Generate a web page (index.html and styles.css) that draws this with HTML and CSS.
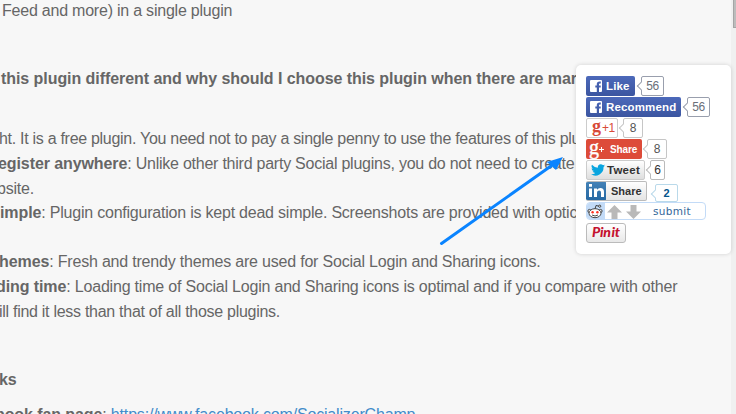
FILE: index.html
```html
<!DOCTYPE html>
<html lang="en">
<head>
<meta charset="utf-8">
<title>Social Login and Sharing</title>
<link rel="stylesheet" href="styles.css">
</head>
<body>
<main class="article">
  <p class="line l1">Feed and more) in a single plugin</p>
  <p class="line l2"><b>this plugin different and why should I choose this plugin when there are mar</b></p>
  <p class="line l3">ht. It is a free plugin. You need not to pay a single penny to use the features of this plu</p>
  <p class="line l4"><b>egister anywhere</b>: Unlike other third party Social plugins, you do not need to create</p>
  <p class="line l5">bsite.</p>
  <p class="line l6"><b>imple</b>: Plugin configuration is kept dead simple. Screenshots are provided with optic</p>
  <p class="line l7"><b>hemes</b>: Fresh and trendy themes are used for Social Login and Sharing icons.</p>
  <p class="line l8"><b>ding time</b>: Loading time of Social Login and Sharing icons is optimal and if you compare with other</p>
  <p class="line l9">ill find it less than that of all those plugins.</p>
  <p class="line l10"><b>ks</b></p>
  <p class="line l11"><b>book fan page</b>: <a>https://www.facebook.com/SocializerChamp</a></p>
</main>
<div class="scrollbar"><div class="thumb"></div></div>
<aside class="panel">
  <div class="row">
    <span class="btn fb like"><svg width="12" height="12" viewBox="0 0 12 12"><path fill="#fff" d="M1 0h10q1 0 1 1v10q0 1-1 1H9V7.500h1.700V5.500H9V4.300q0-.8.900-.8h.9V1.500H9.500Q6.800 1.500 6.800 4v1.500H5.300v2h1.500V12H1q-1 0-1-1V1q0-1 1-1z"/></svg><b>Like</b></span>
    <span class="count fbc">56</span>
  </div>
  <div class="row">
    <span class="btn fb rec"><svg width="12" height="12" viewBox="0 0 12 12"><path fill="#fff" d="M1 0h10q1 0 1 1v10q0 1-1 1H9V7.500h1.700V5.500H9V4.300q0-.8.900-.8h.9V1.500H9.500Q6.800 1.500 6.800 4v1.500H5.300v2h1.500V12H1q-1 0-1-1V1q0-1 1-1z"/></svg><b>Recommend</b></span>
    <span class="count fbc">56</span>
  </div>
  <div class="row">
    <span class="btn plus"><span class="g">g</span><span class="one">+1</span></span>
    <span class="count gc">8</span>
  </div>
  <div class="row">
    <span class="btn gshare"><span class="g">g</span><svg width="5" height="5" viewBox="0 0 5 5"><path d="M0 2.500h5M2.500 0v5" stroke="#fff"/></svg><b>Share</b></span>
    <span class="count gc">8</span>
  </div>
  <div class="row">
    <span class="btn tweet"><svg width="14" height="12" viewBox="0 0 24 20"><path fill="#0aa5df" d="M24 2.400a10 10 0 0 1-2.800.8A5 5 0 0 0 23.300.400a10 10 0 0 1-3.100 1.200A5 5 0 0 0 11.800 6 14 14 0 0 1 1.700.900a5 5 0 0 0 1.500 6.600A5 5 0 0 1 1 6.900a5 5 0 0 0 4 4.900 5 5 0 0 1-2.200.1 5 5 0 0 0 4.600 3.400A10 10 0 0 1 0 17.400 14 14 0 0 0 21.500 4.900 10 10 0 0 0 24 2.400z"/></svg><b>Tweet</b></span>
    <span class="count tc">6</span>
  </div>
  <div class="row">
    <span class="btn linked"><span class="in"><svg width="15" height="14" viewBox="0 0 15 14"><path fill="#fff" d="M0 4.500h3V13H0zM0 0h3v2.800H0zM5 4.500h3v1.300q1.200-1.700 3.300-1.700Q15 4.100 15 8v5h-3V8.500q0-2-1.800-2Q8 6.500 8 8.800V13H5z"/></svg></span><b>Share</b></span>
    <span class="count lc">2</span>
  </div>
  <div class="row">
    <span class="btn reddit"><span class="alien"><svg width="16" height="15" viewBox="0 0 16 15" stroke="#333" stroke-width=".9"><path fill="none" d="M8 5l1-3.500 3 .7"/><circle cx="12.700" cy="2.200" r="1.100" fill="#fff"/><circle cx="2.500" cy="7" r="1.600" fill="#fff"/><circle cx="13.500" cy="7" r="1.600" fill="#fff"/><ellipse cx="8" cy="9.200" rx="6" ry="4.500" fill="#fff"/><g fill="#f32" stroke="none"><circle cx="5.600" cy="8.300" r="1.200"/><circle cx="10.400" cy="8.300" r="1.200"/></g><path fill="none" d="M5 11q3 2 6 0"/></svg></span><svg class="arrows" width="34" height="14" viewBox="0 0 34 14" fill="#b9b9b9"><path d="M7.500 0L15 7.500h-4.500V14h-6V7.500H0zM23.500 0h6v6.500H34L26.500 14 19 6.500h4.500z"/></svg><span class="submit">submit</span></span>
  </div>
  <div class="row">
    <span class="btn pin"><b>Pin</b><b>it</b></span>
  </div>
</aside>
<svg class="pointer" width="126" height="92" viewBox="0 0 126 92"><path d="M2.500 89.500L112 12" stroke="#0a84ff" stroke-width="3" stroke-linecap="round"/><path d="M124 3L117 16 108 8z" fill="#0a84ff"/></svg>
</body>
</html>
```
FILE: styles.css
```css
body { margin: 0; width: 736px; height: 414px; overflow: hidden; position: relative; background: #f7f7f7; font-family: "Liberation Sans", Arial, sans-serif; color: #666; }
.article { height: 414px; overflow: hidden; font-size: 16px; letter-spacing: -.2px; }
.article b { letter-spacing: -.09px; }
.line { margin: 0; height: 25px; line-height: 25px; white-space: nowrap; }
.l1 { margin: -2px 0 43px 2px; letter-spacing: -.22px; }
.l2 { margin: 0 0 35px 1px; }
.article .l2 b { letter-spacing: -.06px; }
.l3 { margin-left: -1px; letter-spacing: -.29px; }
.l4 { margin-left: -2px; letter-spacing: -.24px; }
.l5 { margin-left: -3px; height: 24px; }
.l6 { margin-bottom: 24px; letter-spacing: -.22px; }
.l7 { margin-left: -1px; }
.l8 { margin-left: -4px; }
.l9 { margin: 0 0 43px -1px; letter-spacing: -.28px; }
.l10 { margin: 0 0 10px -1px; }
.l11 { margin-left: -5px; letter-spacing: -.17px; }
.line a { color: #428bca; }
.scrollbar { position: absolute; right: 0; top: 0; width: 5px; height: 414px; background: #f0f0f0; }
.thumb { margin-left: 2px; height: 27px; background: #bcbcbc; border-left: 1px solid #a5a5a5; border-bottom: 1px solid #a5a5a5; }
.panel { position: absolute; left: 576px; top: 65px; width: 155px; height: 189px; box-sizing: border-box; padding: 11px 10px; border-radius: 5px; background: #fff; box-shadow: 0 0 4px rgba(0,0,0,.16); }
.row { display: flex; height: 21px; align-items: flex-start; }
.btn { display: flex; align-items: center; box-sizing: border-box; height: 20px; border-radius: 2px; font-size: 11px; white-space: nowrap; overflow: hidden; }
.btn svg { flex: none; }
.fb { background: linear-gradient(#4c69ba, #3b55a0); color: #fff; padding-left: 4px; gap: 4px; font-size: 11.500px; letter-spacing: .15px; }
.like { width: 49px; }
.rec { width: 95px; }
.count { position: relative; box-sizing: border-box; height: 20px; border: 1px solid #999fad; border-radius: 2px; background: #fff; text-align: center; font-size: 12px; line-height: 19px; color: #6a6f7a; }
.count::before { content: ""; position: absolute; left: -4px; top: 6px; width: 5px; height: 5px; border: solid #999fad; border-width: 0 0 1px 1px; background: #fff; transform: rotate(45deg); }
.fbc { margin-left: 6px; width: 23px; letter-spacing: -.4px; }
.plus { width: 32px; border: 1px solid #ccc; padding-left: 5px; gap: 1px; color: #d84a38; }
.g { font: bold 18px/14px "Liberation Serif", serif; margin-top: -4px; }
.one { font-size: 12px; letter-spacing: -.4px; }
.gc { width: 20px; margin-left: 5px; border-color: #c6c6c6; color: #555; }
.gc::before { border-color: #c6c6c6; }
.gshare { width: 56px; background: #dd4b39; color: #fff; padding-left: 3px; font-size: 10px; letter-spacing: -.1px; }
.gshare .g { font-size: 20px; font-weight: normal; -webkit-text-stroke: .4px #fff; }
.gshare b { margin-left: 6px; }
.tweet { width: 59px; border: 1px solid #ccc; background: linear-gradient(#fff, #dedede); color: #333; padding-left: 4px; gap: 2px; font-size: 11.500px; letter-spacing: .25px; }
.tc { width: 15px; margin-left: 5px; border-color: #bbb; color: #333; }
.tc::before { border-color: #bbb; }
.linked { width: 61px; border: 1px solid #bbb; border-left: 0; background: linear-gradient(#fefefe, #e4e4e4); color: #333; gap: 5px; }
.in { display: flex; flex: none; align-items: center; justify-content: center; width: 20px; height: 20px; background: linear-gradient(#4583b8, #2467a2); border-radius: 2px; }
.lc { width: 23px; height: 18px; margin: 3px 0 0 8px; line-height: 17px; border-color: #b9d9ea; color: #04558b; font-weight: bold; font-size: 11px; }
.lc::before { border-color: #b9d9ea; }
.reddit { width: 120px; height: 18px; border: 1px solid #c3dbf7; border-radius: 4px; color: #369; }
.alien { display: flex; align-items: center; width: 18px; height: 18px; background: #c3dbf7; }
.arrows { margin: 2px 0 0 2px; }
.submit { margin-left: 12px; font: 10.500px "DejaVu Sans", sans-serif; letter-spacing: .3px; }
.pin { width: 40px; border: 1px solid #bbb; border-radius: 3px; background: linear-gradient(#fff, #e8e8e8); color: #c4122f; padding-left: 5px; gap: 1px; font: italic 14px/14px Lato, sans-serif; letter-spacing: -.3px; }
.pin b { font-weight: 900; margin-top: -2px; }
.pointer { position: absolute; left: 439px; top: 154px; }
```
